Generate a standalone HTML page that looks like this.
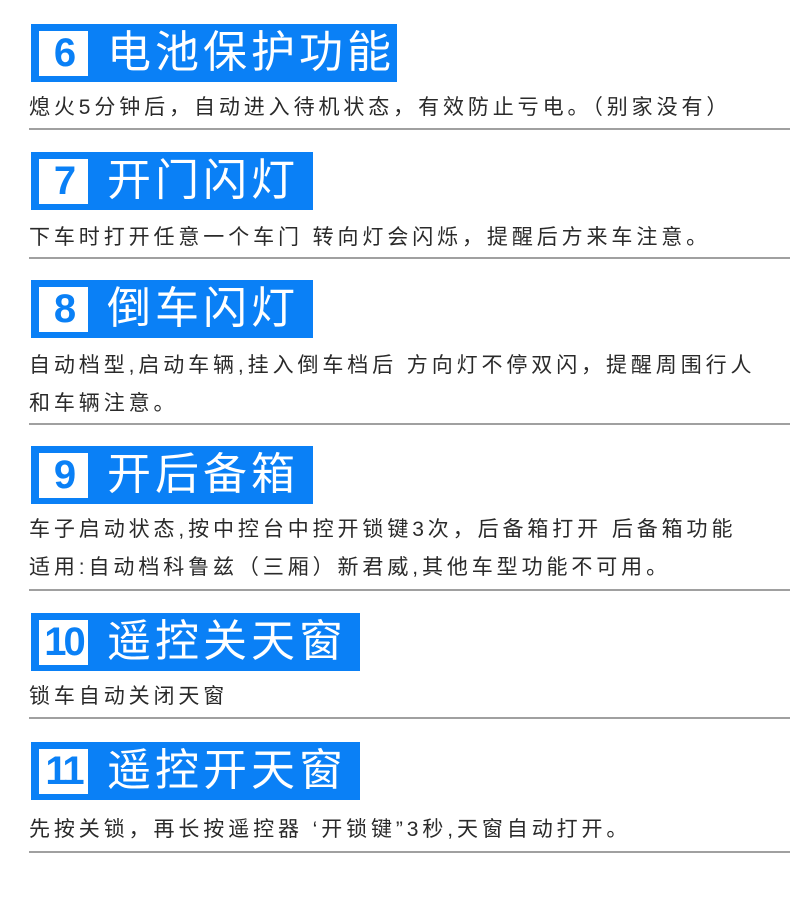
<!DOCTYPE html>
<html><head><meta charset="utf-8"><style>
body{margin:0;width:790px;height:904px;background:#fff;position:relative;overflow:hidden;font-family:"Liberation Sans","Noto Sans CJK SC",sans-serif}
.b{position:absolute;left:31px;height:58px;background:#0a80f6}
.n{position:absolute;left:8px;top:7px;width:49px;height:45px;background:#fff;color:#0a80f6;font-size:40px;font-weight:bold;text-align:center;line-height:45px;letter-spacing:-3px}
.t{position:absolute;left:76px;top:0;line-height:58px;color:#fff;font-size:44px;letter-spacing:4px;white-space:nowrap}
.p{position:absolute;left:29px;color:#2a2a2a;font-size:21px;letter-spacing:3.9px;white-space:nowrap;line-height:38px}
.l{position:absolute;left:29px;right:0;height:2px;background:#a0a0a0}
</style></head><body>
<div class="b" style="top:24px;width:366px"><div class="n">6</div><div class="t">电池保护功能</div></div>
<div class="p" style="top:89px">熄火5分钟后，自动进入待机状态，有效防止亏电。（别家没有）</div>
<div class="l" style="top:128px"></div>

<div class="b" style="top:152px;width:282px"><div class="n">7</div><div class="t">开门闪灯</div></div>
<div class="p" style="top:219px">下车时打开任意一个车门 转向灯会闪烁，提醒后方来车注意。</div>
<div class="l" style="top:257px"></div>

<div class="b" style="top:280px;width:282px"><div class="n">8</div><div class="t">倒车闪灯</div></div>
<div class="p" style="top:347px">自动档型,启动车辆,挂入倒车档后 方向灯不停双闪，提醒周围行人</div>
<div class="p" style="top:385px">和车辆注意。</div>
<div class="l" style="top:423px"></div>

<div class="b" style="top:446px;width:282px"><div class="n">9</div><div class="t">开后备箱</div></div>
<div class="p" style="top:511px">车子启动状态,按中控台中控开锁键3次，后备箱打开 后备箱功能</div>
<div class="p" style="top:549px">适用:自动档科鲁兹（三厢）新君威,其他车型功能不可用。</div>
<div class="l" style="top:589px"></div>

<div class="b" style="top:613px;width:329px"><div class="n">10</div><div class="t">遥控关天窗</div></div>
<div class="p" style="top:678px">锁车自动关闭天窗</div>
<div class="l" style="top:717px"></div>

<div class="b" style="top:742px;width:329px"><div class="n">11</div><div class="t">遥控开天窗</div></div>
<div class="p" style="top:811px">先按关锁，再长按遥控器 ‘开锁键”3秒,天窗自动打开。</div>
<div class="l" style="top:851px"></div>
</body></html>
